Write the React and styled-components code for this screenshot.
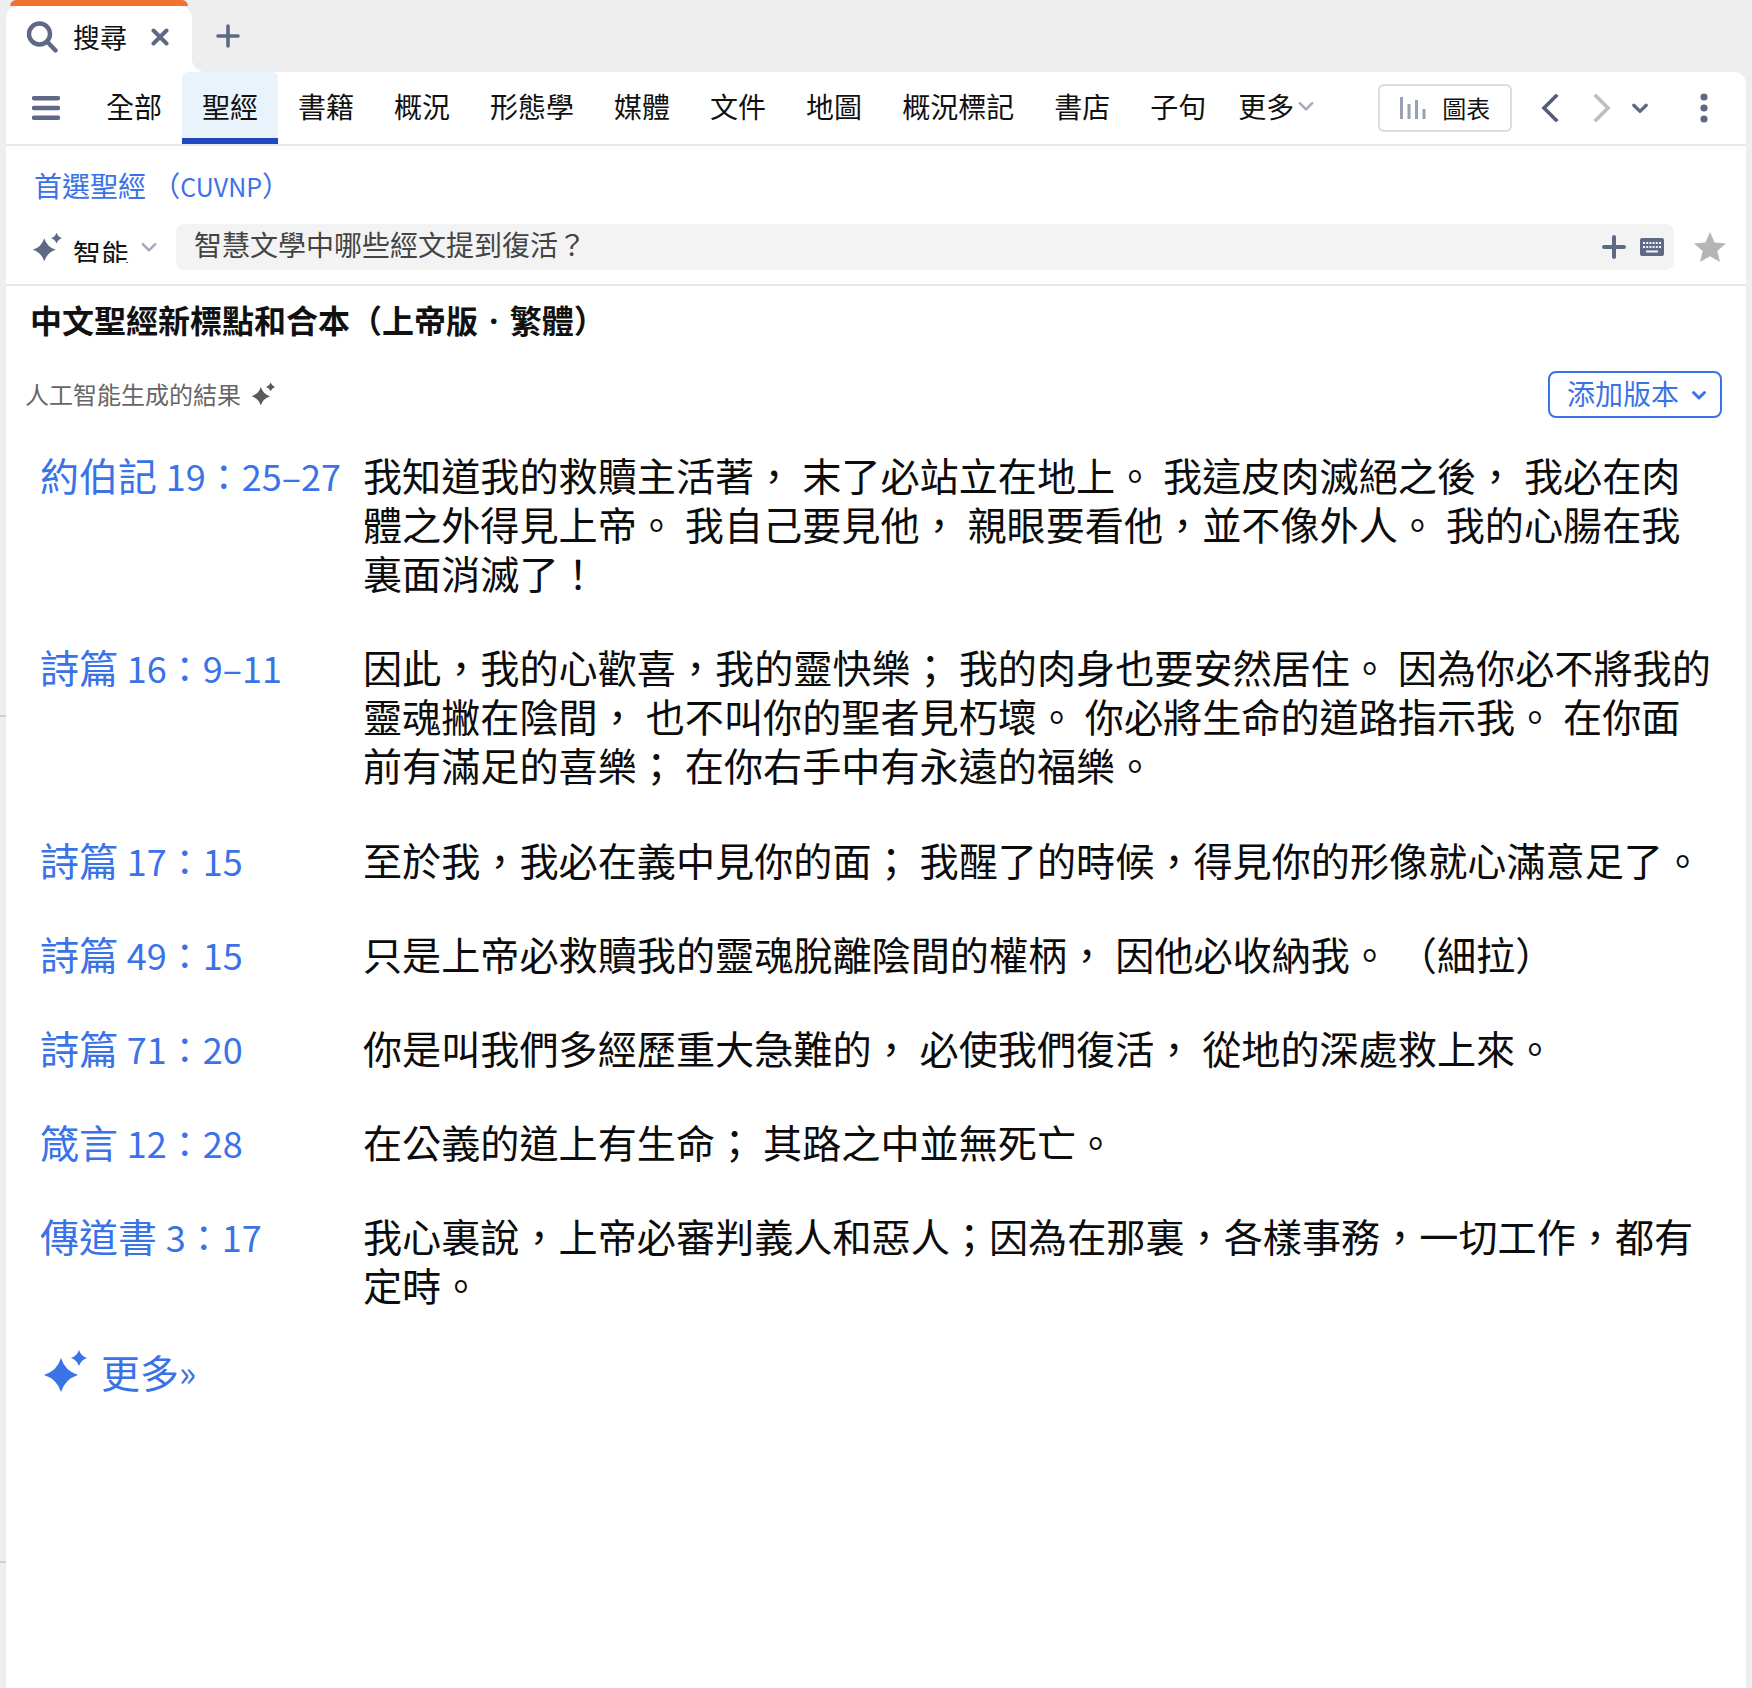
import React from "react";
import styled, { createGlobalStyle } from "styled-components";

const blue = "#3a72e8";
const slate = "#5e6a85";

const verses = [
  { book: "約伯記", place: "19：25–27", text: "我知道我的救贖主活著， 末了必站立在地上。 我這皮肉滅絕之後， 我必在肉體之外得見上帝。 我自己要見他， 親眼要看他，並不像外人。 我的心腸在我裏面消滅了！" },
  { book: "詩篇", place: "16：9–11", text: "因此，我的心歡喜，我的靈快樂； 我的肉身也要安然居住。 因為你必不將我的靈魂撇在陰間， 也不叫你的聖者見朽壞。 你必將生命的道路指示我。 在你面前有滿足的喜樂； 在你右手中有永遠的福樂。" },
  { book: "詩篇", place: "17：15", text: "至於我，我必在義中見你的面； 我醒了的時候，得見你的形像就心滿意足了。" },
  { book: "詩篇", place: "49：15", text: "只是上帝必救贖我的靈魂脫離陰間的權柄， 因他必收納我。 （細拉）" },
  { book: "詩篇", place: "71：20", text: "你是叫我們多經歷重大急難的， 必使我們復活， 從地的深處救上來。" },
  { book: "箴言", place: "12：28", text: "在公義的道上有生命； 其路之中並無死亡。" },
  { book: "傳道書", place: "3：17", text: "我心裏說，上帝必審判義人和惡人；因為在那裏，各樣事務，一切工作，都有定時。" },
];

const navItems = ["全部", "聖經", "書籍", "概況", "形態學", "媒體", "文件", "地圖", "概況標記", "書店", "子句"];

const Sparkle = ({ size, color }) => (
  <svg width={size} height={size} viewBox="0 0 44 44" fill={color}>
    <path d="M18 9Q22 22 35 26Q22 30 18 43Q14 30 1 26Q14 22 18 9Z" />
    <path d="M36 1Q38 7 44 9Q38 11 36 17Q34 11 28 9Q34 7 36 1Z" />
  </svg>
);

const Chevron = ({ width, color, stroke = 3 }) => (
  <svg width={width} height={width} viewBox="0 0 16 16" fill="none" stroke={color} strokeWidth={stroke} strokeLinecap="round" strokeLinejoin="round">
    <path d="M2.5 5.5L8 11l5.5-5.5" />
  </svg>
);

export default function App() {
  return (
    <>
      <GlobalStyle />
      <Page>
        <GutterTick $top={715} />
        <GutterTick $top={1561} />
        <TabStrip>
          <SearchTab>
            <svg width="32" height="32" viewBox="0 0 32 32" fill="none" stroke={slate} strokeWidth="4.4" strokeLinecap="round">
              <circle cx="13.5" cy="13" r="10.5" />
              <path d="M21.5 21l8 8.5" />
            </svg>
            <TabTitle>搜尋</TabTitle>
            <svg width="18" height="18" viewBox="0 0 18 18" stroke={slate} strokeWidth="4" strokeLinecap="round">
              <path d="M2.5 2.5l13 13M15.5 2.5l-13 13" />
            </svg>
          </SearchTab>
          <NewTab>
            <svg width="24" height="24" viewBox="0 0 24 24" stroke={slate} strokeWidth="3.6" strokeLinecap="round">
              <path d="M12 2v20M2 12h20" />
            </svg>
          </NewTab>
        </TabStrip>

        <Panel>
          <NavBar>
            <Hamburger viewBox="0 0 28 24" stroke={slate} strokeWidth="4.4" strokeLinecap="round">
              <path d="M2 2.2h24M2 12h24M2 21.8h24" />
            </Hamburger>
            {navItems.map((item) => (
              <NavTab key={item} $active={item === "聖經"}>
                {item}
              </NavTab>
            ))}
            <MoreTab>
              更多
              <Chevron width={18} color="#a3aaba" stroke={2.2} />
            </MoreTab>
            <ChartButton>
              <svg width="26" height="22" viewBox="0 0 26 22" fill="#98a1b3">
                <rect x="0" y="0" width="3" height="22" />
                <rect x="7.5" y="7" width="3" height="15" />
                <rect x="15" y="3" width="3" height="19" />
                <rect x="22.5" y="12" width="3" height="10" />
              </svg>
              <ChartLabel>圖表</ChartLabel>
            </ChartButton>
            <PagerIcon width="18" height="28" viewBox="0 0 18 28" fill="none" stroke="#545e78" strokeWidth="3.6" strokeLinecap="square">
              <path d="M15 2L3 14l12 12" />
            </PagerIcon>
            <PagerIcon width="18" height="28" viewBox="0 0 18 28" fill="none" stroke="#bcbcc2" strokeWidth="3.6" strokeLinecap="square" $gap={34}>
              <path d="M3 2l12 12L3 26" />
            </PagerIcon>
            <HistoryChevron>
              <Chevron width={18} color={slate} />
            </HistoryChevron>
            <KebabIcon width="8" height="30" viewBox="0 0 8 30" fill={slate}>
              <circle cx="4" cy="4" r="3.6" />
              <circle cx="4" cy="15" r="3.6" />
              <circle cx="4" cy="26" r="3.6" />
            </KebabIcon>
          </NavBar>

          <SearchArea>
            <BibleLink>
              首選聖經 （<Code>CUVNP</Code>）
            </BibleLink>
            <SearchRow>
              <ModeSelect>
                <Sparkle size={30} color={slate} />
                <ModeLabel>智能</ModeLabel>
                <Chevron width={18} color="#a3aaba" stroke={2.2} />
              </ModeSelect>
              <QueryBox>
                <QueryText>智慧文學中哪些經文提到復活？</QueryText>
                <svg width="24" height="24" viewBox="0 0 24 24" stroke={slate} strokeWidth="4" strokeLinecap="round">
                  <path d="M12 2v20M2 12h20" />
                </svg>
                <svg width="24" height="18" viewBox="0 0 24 18">
                  <rect width="24" height="18" rx="2" fill={slate} />
                  <path d="M3 5h18M3 9h18" stroke="#f3f3f4" strokeWidth="2" strokeDasharray="2 1.2" />
                  <path d="M6 13.500h12" stroke="#f3f3f4" strokeWidth="2" />
                </svg>
              </QueryBox>
              <StarIcon width="32" height="30" viewBox="0 0 32 30" fill="#b5b5b5">
                <path d="M16 0l4.600 10.600 11.400 1-8.700 7.500 2.700 10.900L16 24.200 6 30l2.700-10.900L0 11.600l11.400-1z" />
              </StarIcon>
            </SearchRow>
          </SearchArea>

          <Results>
            <VersionTitle>
              中文聖經新標點和合本（上帝版<MiddleDot> · </MiddleDot>繁體）
            </VersionTitle>
            <ResultsHead>
              <AiNote>
                人工智能生成的結果
                <Sparkle size={24} color="#5a5a5a" />
              </AiNote>
              <AddVersion>
                <AddLabel>添加版本</AddLabel>
                <Chevron width={16} color={blue} />
              </AddVersion>
            </ResultsHead>
            <VerseList>
              {verses.map((verse) => (
                <VerseRow key={verse.book + verse.place}>
                  <VerseRef>
                    {verse.book} <VersePlace>{verse.place}</VersePlace>
                  </VerseRef>
                  <VerseText>{verse.text}</VerseText>
                </VerseRow>
              ))}
            </VerseList>
            <MoreLink>
              <Sparkle size={44} color={blue} />
              更多<Guillemet>»</Guillemet>
            </MoreLink>
          </Results>
        </Panel>
      </Page>
    </>
  );
}

const GlobalStyle = createGlobalStyle`
  html, body {
    margin: 0;
    padding: 0;
    background: #eeeeee;
  }
  body {
    font-family: "Noto Sans CJK TC", "Noto Sans", sans-serif;
    color: #111;
  }
  * {
    box-sizing: border-box;
  }
`;

const Page = styled.div`
  position: relative;
  display: flex;
  flex-direction: column;
  height: 1688px;
  padding: 0 6px;
  overflow: hidden;
  background: #eeeeee;
`;

const GutterTick = styled.div`
  position: absolute;
  left: 0;
  top: ${({ $top }) => $top}px;
  width: 6px;
  height: 2px;
  background: #cfcfcf;
`;

const TabStrip = styled.div`
  display: flex;
  height: 72px;
  flex-shrink: 0;
`;

const SearchTab = styled.div`
  position: relative;
  display: flex;
  align-items: center;
  width: 186px;
  height: 66px;
  margin-top: 6px;
  padding: 0 0 4px 20px;
  background: #fff;
  border-radius: 12px 12px 0 0;
  &::before {
    content: "";
    position: absolute;
    top: -6px;
    left: 4px;
    right: 4px;
    height: 6px;
    background: #f07430;
    border-radius: 8px 8px 0 0;
  }
  &::after {
    content: "";
    position: absolute;
    right: -14px;
    bottom: 0;
    width: 14px;
    height: 14px;
    background: radial-gradient(circle at 100% 0, transparent 14px, #fff 14.5px);
  }
`;

const TabTitle = styled.span`
  margin: 0 24px 0 15px;
  font-size: 27px;
  line-height: 34px;
`;

const NewTab = styled.div`
  display: flex;
  align-items: center;
  height: 72px;
  padding: 0 0 0 24px;
`;

const Panel = styled.div`
  display: flex;
  flex-direction: column;
  flex: 1;
  background: #fff;
  border-radius: 0 12px 0 0;
`;

const NavBar = styled.div`
  display: flex;
  align-items: stretch;
  height: 74px;
  padding-left: 26px;
  border-bottom: 2px solid #e8e8e8;
`;

const Hamburger = styled.svg`
  width: 28px;
  height: 24px;
  margin: 24px 26px 0 0;
`;

const NavTab = styled.div`
  display: flex;
  align-items: center;
  height: 72px;
  padding: 0 20px 4px;
  font-size: 28px;
  line-height: 34px;
  white-space: nowrap;
  color: #111;
  background: ${({ $active }) => ($active ? "#e9f3fc" : "transparent")};
  border-radius: 6px 6px 0 0;
  box-shadow: ${({ $active }) => ($active ? "inset 0 -6px 0 #2048c0" : "none")};
`;

const MoreTab = styled.div`
  display: flex;
  align-items: center;
  gap: 3px;
  height: 72px;
  margin-left: 12px;
  padding-bottom: 4px;
  font-size: 28px;
  line-height: 34px;
  white-space: nowrap;
`;

const ChartButton = styled.div`
  display: flex;
  align-items: center;
  gap: 16px;
  width: 134px;
  height: 48px;
  margin: 12px 0 0 63px;
  padding: 0 0 0 20px;
  border: 2px solid #dddddd;
  border-radius: 6px;
`;

const ChartLabel = styled.span`
  font-size: 24px;
  line-height: 30px;
`;

const PagerIcon = styled.svg`
  align-self: center;
  margin-left: ${({ $gap }) => $gap || 29}px;
  flex-shrink: 0;
`;

const HistoryChevron = styled.div`
  display: flex;
  align-items: center;
  margin-left: 20px;
`;

const KebabIcon = styled.svg`
  align-self: center;
  margin-left: 51px;
`;

const SearchArea = styled.div`
  padding: 22px 0 14px 27px;
  border-bottom: 2px solid #e8e8e8;
`;

const BibleLink = styled.div`
  height: 34px;
  margin-left: 1px;
  font-size: 28px;
  line-height: 34px;
  color: ${blue};
`;

const Code = styled.span`
  font-size: 25px;
`;

const SearchRow = styled.div`
  display: flex;
  align-items: center;
  margin-top: 22px;
`;

const ModeSelect = styled.div`
  display: flex;
  align-items: center;
  width: 143px;
  height: 46px;
  & > svg:first-child {
    margin: 0 0 0 -1px;
  }
`;

/* the reference clips the lower edge of this label */
const ModeLabel = styled.span`
  display: block;
  width: 57px;
  height: 25px;
  margin: 7px 10px 0 11px;
  overflow: hidden;
  font-size: 28px;
  line-height: 30px;
`;

const QueryBox = styled.div`
  display: flex;
  align-items: center;
  gap: 14px;
  width: 1498px;
  height: 46px;
  padding: 0 10px 0 18px;
  background: #f3f3f4;
  border-radius: 8px;
`;

const QueryText = styled.span`
  flex: 1;
  margin-top: -6px;
  font-size: 28px;
  line-height: 34px;
  color: #444;
`;

const StarIcon = styled.svg`
  margin-left: 20px;
  flex-shrink: 0;
`;

const Results = styled.div`
  padding: 13px 24px 0 24px;
`;

const VersionTitle = styled.h1`
  margin: 0;
  font-size: 32px;
  line-height: 40px;
  font-weight: 700;
  color: #111;
`;

const MiddleDot = styled.span`
  padding: 0 3px;
  font-family: "Noto Sans", sans-serif;
`;

const ResultsHead = styled.div`
  display: flex;
  align-items: center;
  justify-content: space-between;
  margin-top: 30px;
`;

const AiNote = styled.div`
  display: flex;
  align-items: center;
  gap: 10px;
  margin: -2px 0 0 -5px;
  font-size: 24px;
  line-height: 30px;
  color: #666;
`;

const AddVersion = styled.div`
  display: flex;
  align-items: center;
  gap: 12px;
  width: 174px;
  height: 47px;
  padding-left: 17px;
  color: ${blue};
  border: 2px solid ${blue};
  border-radius: 8px;
`;

const AddLabel = styled.span`
  margin-top: -3px;
  font-size: 28px;
  line-height: 34px;
`;

const VerseList = styled.div`
  display: flex;
  flex-direction: column;
  gap: 45px;
  margin-top: 32px;
  padding-left: 10px;
`;

const VerseRow = styled.div`
  display: grid;
  grid-template-columns: 323px 1350px;
`;

const VerseRef = styled.div`
  font-size: 39px;
  line-height: 49px;
  white-space: nowrap;
  color: ${blue};
`;

const VersePlace = styled.span`
  font-size: 36px;
  line-height: 1;
`;

const VerseText = styled.div`
  font-size: 39.13px;
  line-height: 49.1px;
  color: #0c0c0c;
`;

const MoreLink = styled.div`
  display: flex;
  align-items: center;
  gap: 14px;
  margin: 39px 0 0 13px;
  font-size: 39px;
  line-height: 46px;
  color: ${blue};
`;

const Guillemet = styled.span`
  margin-left: -14px;
  font-size: 36px;
`;
